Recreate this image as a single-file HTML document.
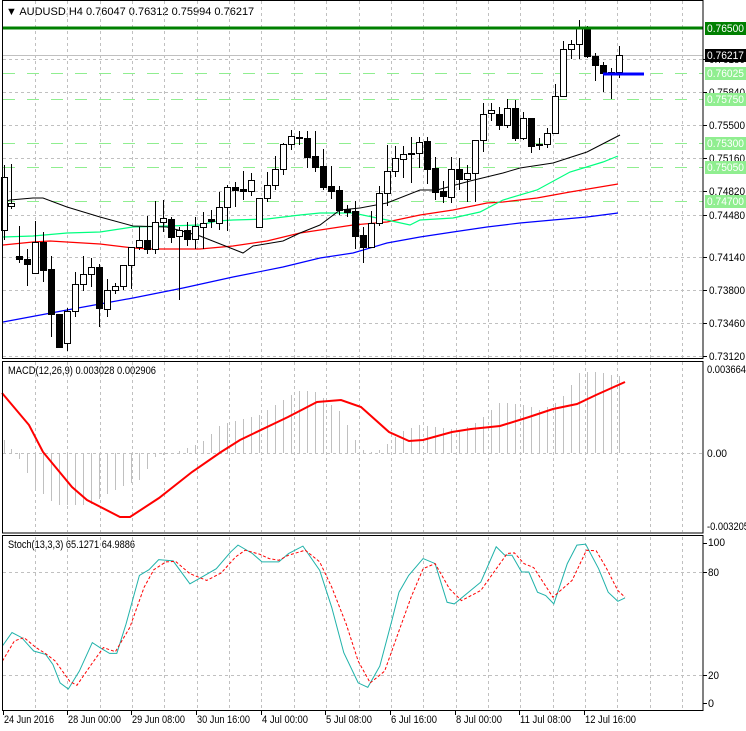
<!DOCTYPE html>
<html><head><meta charset="utf-8"><style>
html,body{margin:0;padding:0;background:#fff;width:746px;height:731px;overflow:hidden}
svg text{font-family:"Liberation Sans",sans-serif;font-size:11px;fill:#000}
svg text.s{font-size:11px}
</style></head><body>
<svg id="s" width="746" height="731" xmlns="http://www.w3.org/2000/svg" shape-rendering="crispEdges">
<text x="6" y="15">▼ AUDUSD,H4  0.76047 0.76312 0.75994 0.76217</text>
<text class="s" x="8" y="374" textLength="148" lengthAdjust="spacingAndGlyphs">MACD(12,26,9) 0.003028 0.002906</text>
<text class="s" x="8" y="548" textLength="127" lengthAdjust="spacingAndGlyphs">Stoch(13,3,3) 65.1271 64.9886</text>
</svg>
<script>
var s=document.getElementById('s'),NS='http://www.w3.org/2000/svg';
function el(t,a,txt){var e=document.createElementNS(NS,t);for(var k in a)e.setAttribute(k,a[k]);if(txt!=null)e.textContent=txt;s.appendChild(e);return e;}
function line(x1,y1,x2,y2,c,w,d){var a={x1:x1,y1:y1,x2:x2,y2:y2,stroke:c,'stroke-width':w||1};if(d)a['stroke-dasharray']=d;return el('line',a);}
function pl(pts,c,w,d,sr){var a={points:pts.map(function(p){return p[0]+','+p[1]}).join(' '),fill:'none',stroke:c,'stroke-width':w||1};if(d)a['stroke-dasharray']=d;if(sr)a['shape-rendering']='auto';return el('polyline',a);}
function lab(x,y,t,L,cls,st){var a={x:x,y:y,'class':cls||'s',textLength:L,lengthAdjust:'spacingAndGlyphs'};if(st)a.style=st;return el('text',a,t);}
var G='#c0c0c0',GD='3,3';
for(var x=35;x<703;x+=32.35){var xx=Math.round(x)+.5;line(xx,1,xx,358,G,1,GD);line(xx,362,xx,532,G,1,GD);line(xx,537,xx,710,G,1,GD);}
var pr=[[59,'0.76180'],[92,'0.75840'],[125,'0.75500'],[158,'0.75160'],[191,'0.74820'],[215,'0.74480'],[257,'0.74140'],[290,'0.73800'],[323,'0.73460'],[356,'0.73120']];
pr.forEach(function(p){line(3,p[0]+.5,703,p[0]+.5,G,1,GD);line(703,p[0]+.5,707,p[0]+.5,'#000');lab(709,p[0]+4,p[1],36);});
line(3,453.5,703,453.5,G,1,GD);line(3,572.5,703,572.5,G,1,GD);line(3,675.5,703,675.5,G,1,GD);
line(3,55.5,703,55.5,G,1);
[73,99,143,167,201].forEach(function(y){line(3,y+.5,703,y+.5,'#90ee90',1,'12,12');});
function P(a){var r=[];for(var i=0;i<a.length;i+=2)r.push([a[i],a[i+1]]);return r;}
pl(P([3,322,67,310,133,298,183,288,233,277,283,267,320,258,353,253,387,243,420,237,453,232,487,227,520,223,553,220,587,217,618,213]),'#0000ff',1.2,null,1);
pl(P([3,245,33,242,50,241,100,244,133,248,150,249,200,249,233,246,267,241,300,233,320,230,353,225,387,222,420,215,453,210,487,203,503,202,537,198,570,192,618,184]),'#ff0000',1.2,null,1);
pl(P([3,237,33,236,67,233,100,232,133,227,167,226,200,225,217,221,233,220,267,219,300,215,320,213,353,213,387,220,410,225,420,220,453,218,480,212,503,200,537,190,570,172,603,162,618,156]),'#00ff7f',1.2,null,1);
pl(P([3,202,10,200,33,198,43,198,67,207,100,217,133,226,167,227,200,236,233,249,243,253,253,246,283,241,300,233,320,225,340,210,360,208,387,203,420,190,437,190,470,181,503,173,520,168,553,163,587,152,620,135]),'#000',1,null,1);
var C=[[4,177,230,0,165,240],[11,203,206,0,164,209],[19,256,259,1,226,263],[27,259,264,1,249,286],[35,242,273,0,221,273],[43,242,270,1,232,282],[51,269,314,1,256,337],[59,314,347,1,314,347],[67,311,343,0,308,351],[75,284,311,0,272,317],[83,274,284,0,256,291],[91,267,274,0,258,287],[99,267,308,1,264,327],[107,290,309,0,279,317],[115,286,290,0,283,294],[123,265,286,0,265,290],[131,247,265,0,247,289],[139,240,247,0,227,250],[147,240,249,1,216,254],[155,222,249,0,201,254],[163,218,222,0,200,232],[171,219,237,1,217,243],[179,230,236,0,227,300],[187,230,239,1,222,246],[195,226,239,0,217,249],[203,223,227,0,212,249],[211,219,221,1,210,228],[219,207,223,0,192,230],[227,187,207,0,185,231],[235,187,190,1,182,207],[243,189,191,1,171,200],[251,180,191,0,173,196],[259,198,227,0,198,227],[267,185,198,0,172,202],[275,169,185,0,156,190],[283,144,169,0,143,175],[291,136,144,0,130,150],[299,137,138,1,131,145],[307,138,157,1,131,168],[315,156,167,1,131,172],[323,166,187,1,149,190],[331,186,191,1,166,199],[339,190,210,1,186,215],[347,209,212,1,205,217],[355,211,236,1,201,249],[363,235,247,1,227,263],[371,223,247,0,211,245],[379,193,223,0,186,226],[387,171,193,0,145,206],[395,158,171,0,146,177],[403,154,159,0,146,178],[411,153,154,0,137,183],[419,142,153,0,137,168],[427,141,169,1,137,184],[435,168,192,1,157,200],[443,191,196,1,181,203],[451,169,197,0,157,203],[459,169,179,1,158,190],[467,173,179,0,165,202],[475,140,173,0,140,202],[483,114,140,0,103,152],[491,110,113,0,103,121],[499,114,125,1,107,130],[507,108,125,0,99,128],[515,108,138,1,100,141],[523,118,138,0,112,140],[531,118,146,1,118,153],[539,144,145,1,138,150],[547,133,144,0,128,148],[555,96,133,0,84,133],[563,49,96,0,41,97],[571,44,49,0,40,59],[579,28,44,0,20,59],[587,28,56,1,26,58],[595,56,65,1,53,81],[603,65,73,1,62,92],[611,72,73,1,68,99],[619,55,72,0,46,78]];
C.forEach(function(c){var x=c[0]+.5;line(x,c[4],x,c[5],'#000');var h=Math.max(1,c[2]-c[1]);el('rect',{x:c[0]-2.5,y:c[1]+.5,width:6,height:h,fill:c[3]?'#000':'#fff',stroke:'#000','stroke-width':1});});
line(3,28,703,28,'#008000',3);
line(603,74,644,74,'#0000ff',3);
function box(y,bg,t){el('rect',{x:705,y:y-6,width:41,height:13,fill:bg});lab(707,y+4,t,37,'s','fill:#fff');}
box(28,'#008000','0.76500');box(55,'#000','0.76217');box(73,'#90ee90','0.76025');box(99,'#90ee90','0.75750');box(143,'#90ee90','0.75300');box(167,'#90ee90','0.75050');box(201,'#90ee90','0.74700');
var H=P([4,440,10,448,20,460,35,488,50,500,60,505,75,505,90,505,105,495,120,487,140,480,155,457,175,452,190,447,205,440,220,425,240,420,260,415,280,402,300,390,315,392,340,412,355,440,365,453,380,450,400,432,420,425,440,428,460,430,480,420,500,402,520,404,540,410,560,400,580,372,600,372,615,376]);
function interp(pts,x){for(var i=0;i<pts.length-1;i++){if(x>=pts[i][0]&&x<=pts[i+1][0]){var t=(x-pts[i][0])/(pts[i+1][0]-pts[i][0]);return pts[i][1]+t*(pts[i+1][1]-pts[i][1]);}}return pts[pts.length-1][1];}
for(var i=0;i<C.length;i++){var hx=C[i][0];var v=interp(H,hx);line(hx+.5,453,hx+.5,Math.round(v),'#c0c0c0',1);}
var M=P([2,393,29,425,43,452,72,487,87,500,120,517,130,517,159,498,192,472,221,452,240,440,288,417,317,402,341,400,361,407,389,432,409,441,423,440,452,432,471,429,500,426,529,417,553,409,577,404,596,395,625,382]);
el('polyline',{points:M.map(function(p){return p.join(',')}).join(' '),fill:'none',stroke:'#ff0000','stroke-width':2,'shape-rendering':'auto'});
lab(707,373,'0.003664',39);lab(707,457,'0.00',20);lab(707,530,'-0.003205',42);
function conv(a){var r=[];for(var i=0;i<a.length;i+=2)r.push([(a[i]/2.08).toFixed(1),(a[i+1]/2.975+530).toFixed(1)]);return r;}
var K=conv([5,345,25,305,45,320,70,360,95,370,110,400,125,455,142,473,165,420,192,335,210,352,228,367,243,367,262,280,290,135,310,118,330,88,360,92,395,160,420,140,450,115,480,65,495,45,525,70,545,95,580,95,600,70,630,48,665,120,690,230,715,365,745,455,765,468,790,405,815,270,830,185,850,135,880,85,905,100,930,215,945,220,1000,155,1032,50,1050,75,1065,75,1085,125,1100,125,1118,185,1135,195,1152,220,1180,100,1200,45,1218,42,1245,115,1265,185,1285,212,1300,202]);
var D=conv([5,390,30,330,50,320,75,350,95,368,115,390,145,450,160,462,190,400,215,350,240,362,270,290,300,170,320,118,345,95,365,93,395,130,430,150,460,128,490,80,510,60,540,72,560,85,580,90,600,75,635,60,665,95,690,170,720,280,745,390,770,455,800,420,830,300,855,200,880,115,905,100,935,175,960,210,1000,180,1030,120,1055,70,1070,68,1090,100,1110,112,1150,200,1190,150,1220,60,1240,62,1260,110,1285,180,1300,200]);
pl(K,'#20b2aa',1,null,1);pl(D,'#ff0000',1,'3,2',1);
lab(708,546,'100',17);lab(708,576,'80',11);lab(708,679,'20',11);lab(708,707,'0',6);
[543,572,675,703].forEach(function(y){line(703,y+.5,707,y+.5,'#000');});
el('rect',{x:2.5,y:0.5,width:700.5,height:358,fill:'none',stroke:'#000'});
el('rect',{x:2.5,y:361.5,width:700.5,height:171.5,fill:'none',stroke:'#000'});
el('rect',{x:2.5,y:535.5,width:700.5,height:175,fill:'none',stroke:'#000'});
var T=[[3,'24 Jun 2016',50],[67,'28 Jun 00:00',53],[131,'29 Jun 08:00',53],[196,'30 Jun 16:00',53],[261,'4 Jul 00:00',46],[325,'5 Jul 08:00',46],[390,'6 Jul 16:00',46],[455,'8 Jul 00:00',46],[519,'11 Jul 08:00',51],[584,'12 Jul 16:00',51]];
T.forEach(function(t){line(t[0]+.5,711,t[0]+.5,715,'#000');lab(t[0]+1,723,t[1],t[2]);});
</script>
</body></html>
